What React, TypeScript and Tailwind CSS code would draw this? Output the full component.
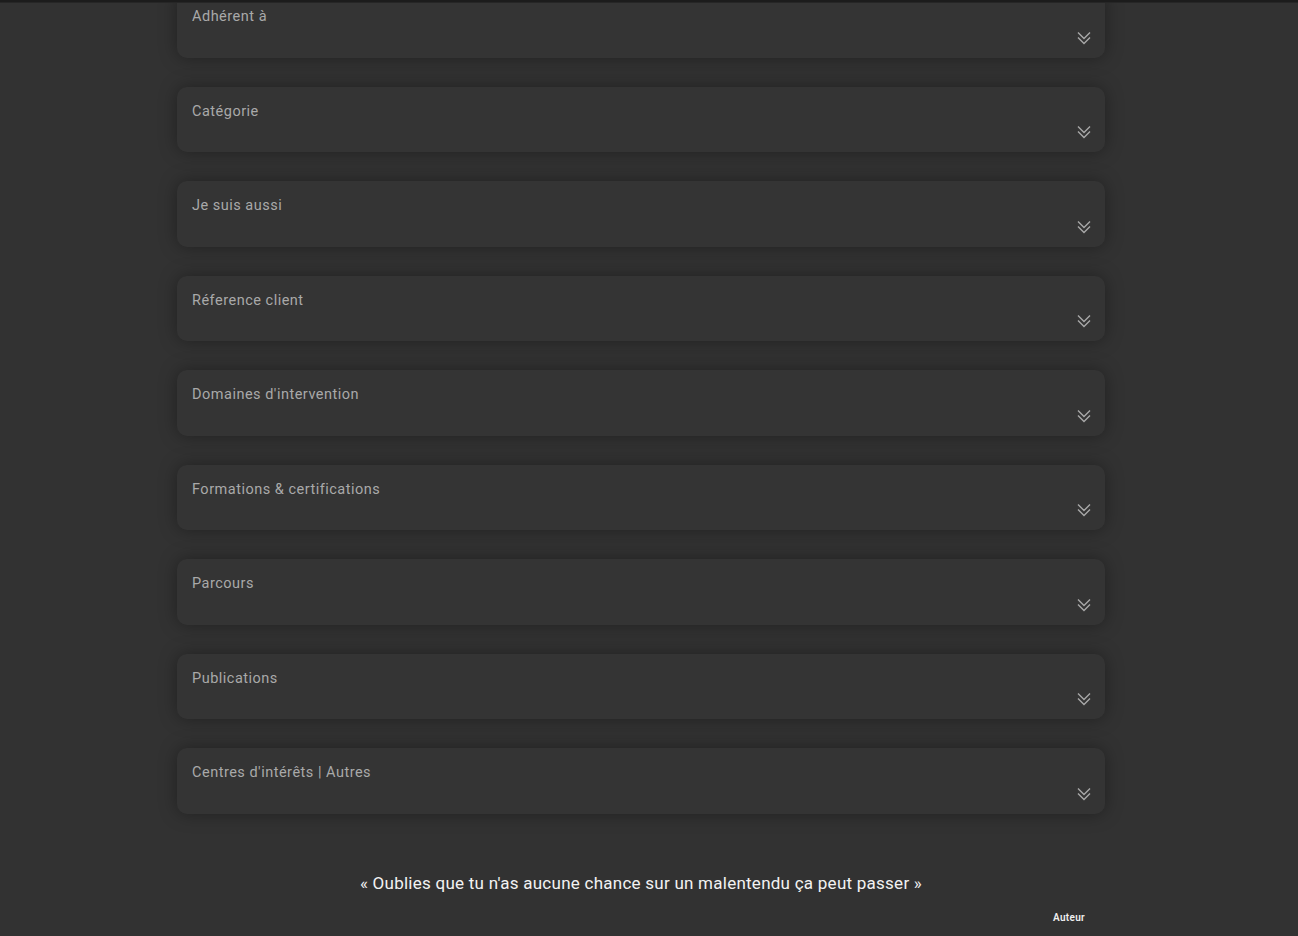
const sections = [
  'Adhérent à',
  'Catégorie',
  'Je suis aussi',
  'Réference client',
  "Domaines d'intervention",
  'Formations & certifications',
  'Parcours',
  'Publications',
  "Centres d'intérêts | Autres",
];

function DoubleChevron() {
  return (
    <svg width="16" height="16" viewBox="0 0 16 16" fill="none" className="text-[#a8a8a8]">
      <path d="M2 2.5 L8 8.5 L14 2.5" stroke="currentColor" strokeWidth="1.4" />
      <path d="M2 7.5 L8 13.5 L14 7.5" stroke="currentColor" strokeWidth="1.4" />
    </svg>
  );
}

function SectionCard({ title }: { title: string }) {
  return (
    <div className="h-[65.5px] rounded-[10px] bg-[#343434] shadow-[0_0_18px_rgba(0,0,0,0.35)] px-[15px] pt-[16px] relative">
      <div className="text-[14.5px] leading-[18px] tracking-[0.5px] text-[#a9a9a9]">{title}</div>
      <div className="absolute right-[13px] bottom-[12px]">
        <DoubleChevron />
      </div>
    </div>
  );
}

export default function App() {
  return (
    <div
      className="min-h-[936px] h-[936px] overflow-hidden bg-[#323232] relative"
      style={{ fontFamily: 'Roboto, "Liberation Sans", sans-serif' }}
    >
      <div className="absolute top-0 left-0 right-0 h-[3px] bg-[#1c1c1c] border-b border-[#262626] z-10" />
      <div className="w-[1282px]">
        <div className="w-[928px] mx-auto -mt-[8px] flex flex-col gap-[29px]">
          {sections.map((s) => (
            <SectionCard key={s} title={s} />
          ))}
        </div>
        <div className="mt-[57px] text-center text-[17px] tracking-[0.25px] text-[#f2f2f2]">
          « Oublies que tu n'as aucune chance sur un malentendu ça peut passer »
        </div>
        <div className="w-[928px] mx-auto flex justify-end pr-[20px] mt-[14px]">
          <span className="text-[10px] font-semibold tracking-[0.3px] text-[#f0f0f0]">Auteur</span>
        </div>
      </div>
    </div>
  );
}
